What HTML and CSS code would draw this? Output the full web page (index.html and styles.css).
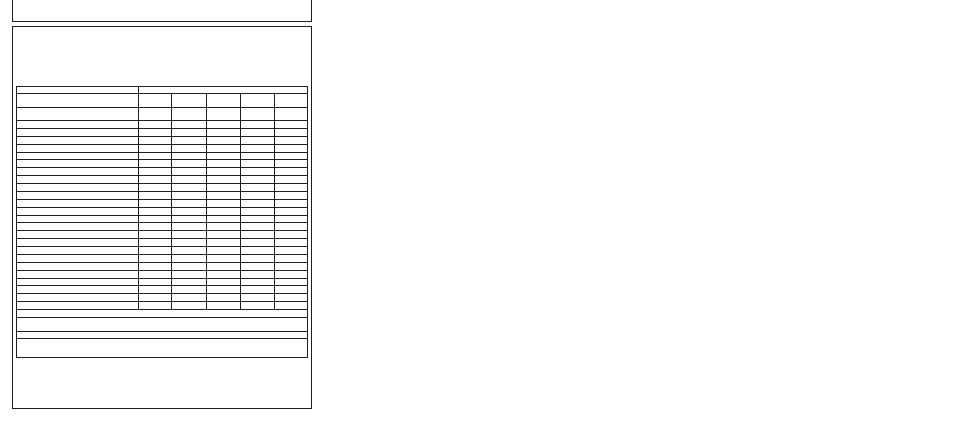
FILE: index.html
```html
<!DOCTYPE html>
<html>
<head>
<meta charset="utf-8">
<link rel="stylesheet" href="styles.css">
</head>
<body>
<div class="page">
  <div class="box top-box"></div>
  <div class="box main-box">
    <div class="grid">
      <div class="row h7"><div class="cell c-label"></div><div class="cell c-span"></div></div>
      <div class="row h14"><div class="cell c1"></div><div class="cell c2"></div><div class="cell c3"></div><div class="cell c4"></div><div class="cell c5"></div><div class="cell c6"></div></div>
      <div class="row h13"><div class="cell c1"></div><div class="cell c2"></div><div class="cell c3"></div><div class="cell c4"></div><div class="cell c5"></div><div class="cell c6"></div></div>
      <div class="data">
        <div class="row d"><div class="cell c1"></div><div class="cell c2"></div><div class="cell c3"></div><div class="cell c4"></div><div class="cell c5"></div><div class="cell c6"></div></div>
        <div class="row d"><div class="cell c1"></div><div class="cell c2"></div><div class="cell c3"></div><div class="cell c4"></div><div class="cell c5"></div><div class="cell c6"></div></div>
        <div class="row d"><div class="cell c1"></div><div class="cell c2"></div><div class="cell c3"></div><div class="cell c4"></div><div class="cell c5"></div><div class="cell c6"></div></div>
        <div class="row d"><div class="cell c1"></div><div class="cell c2"></div><div class="cell c3"></div><div class="cell c4"></div><div class="cell c5"></div><div class="cell c6"></div></div>
        <div class="row d"><div class="cell c1"></div><div class="cell c2"></div><div class="cell c3"></div><div class="cell c4"></div><div class="cell c5"></div><div class="cell c6"></div></div>
        <div class="row d"><div class="cell c1"></div><div class="cell c2"></div><div class="cell c3"></div><div class="cell c4"></div><div class="cell c5"></div><div class="cell c6"></div></div>
        <div class="row d"><div class="cell c1"></div><div class="cell c2"></div><div class="cell c3"></div><div class="cell c4"></div><div class="cell c5"></div><div class="cell c6"></div></div>
        <div class="row d"><div class="cell c1"></div><div class="cell c2"></div><div class="cell c3"></div><div class="cell c4"></div><div class="cell c5"></div><div class="cell c6"></div></div>
        <div class="row d"><div class="cell c1"></div><div class="cell c2"></div><div class="cell c3"></div><div class="cell c4"></div><div class="cell c5"></div><div class="cell c6"></div></div>
        <div class="row d"><div class="cell c1"></div><div class="cell c2"></div><div class="cell c3"></div><div class="cell c4"></div><div class="cell c5"></div><div class="cell c6"></div></div>
        <div class="row d"><div class="cell c1"></div><div class="cell c2"></div><div class="cell c3"></div><div class="cell c4"></div><div class="cell c5"></div><div class="cell c6"></div></div>
        <div class="row d"><div class="cell c1"></div><div class="cell c2"></div><div class="cell c3"></div><div class="cell c4"></div><div class="cell c5"></div><div class="cell c6"></div></div>
        <div class="row d"><div class="cell c1"></div><div class="cell c2"></div><div class="cell c3"></div><div class="cell c4"></div><div class="cell c5"></div><div class="cell c6"></div></div>
        <div class="row d"><div class="cell c1"></div><div class="cell c2"></div><div class="cell c3"></div><div class="cell c4"></div><div class="cell c5"></div><div class="cell c6"></div></div>
        <div class="row d"><div class="cell c1"></div><div class="cell c2"></div><div class="cell c3"></div><div class="cell c4"></div><div class="cell c5"></div><div class="cell c6"></div></div>
        <div class="row d"><div class="cell c1"></div><div class="cell c2"></div><div class="cell c3"></div><div class="cell c4"></div><div class="cell c5"></div><div class="cell c6"></div></div>
        <div class="row d"><div class="cell c1"></div><div class="cell c2"></div><div class="cell c3"></div><div class="cell c4"></div><div class="cell c5"></div><div class="cell c6"></div></div>
        <div class="row d"><div class="cell c1"></div><div class="cell c2"></div><div class="cell c3"></div><div class="cell c4"></div><div class="cell c5"></div><div class="cell c6"></div></div>
        <div class="row d"><div class="cell c1"></div><div class="cell c2"></div><div class="cell c3"></div><div class="cell c4"></div><div class="cell c5"></div><div class="cell c6"></div></div>
        <div class="row d"><div class="cell c1"></div><div class="cell c2"></div><div class="cell c3"></div><div class="cell c4"></div><div class="cell c5"></div><div class="cell c6"></div></div>
        <div class="row d"><div class="cell c1"></div><div class="cell c2"></div><div class="cell c3"></div><div class="cell c4"></div><div class="cell c5"></div><div class="cell c6"></div></div>
        <div class="row d"><div class="cell c1"></div><div class="cell c2"></div><div class="cell c3"></div><div class="cell c4"></div><div class="cell c5"></div><div class="cell c6"></div></div>
        <div class="row d"><div class="cell c1"></div><div class="cell c2"></div><div class="cell c3"></div><div class="cell c4"></div><div class="cell c5"></div><div class="cell c6"></div></div>
        <div class="row d"><div class="cell c1"></div><div class="cell c2"></div><div class="cell c3"></div><div class="cell c4"></div><div class="cell c5"></div><div class="cell c6"></div></div>
      </div>
      <div class="row h8 full"></div>
      <div class="row h14 full"></div>
      <div class="row h7 full"></div>
      <div class="row h19 full"></div>
    </div>
  </div>
</div>
</body>
</html>
```
FILE: styles.css
```css
* { box-sizing: border-box; }
html, body { margin: 0; padding: 0; background: #fff; }
body { font-family: "Liberation Sans", Arial, sans-serif; }

.page {
  padding-left: 12px;
  width: 312px;
}

.box {
  width: 300px;
  border: 1px solid #1e1e1e;
  background: #fff;
}

.top-box {
  margin-top: -20px;
  height: 42px;
}

.main-box {
  margin-top: 4px;
  height: 383px;
  padding: 59px 3px 0 3px;
}

.grid {
  width: 292px;
  border-top: 1px solid #1e1e1e;
  border-left: 1px solid #1e1e1e;
  border-right: 1px solid #1e1e1e;
}

.row {
  display: flex;
  border-bottom: 1px solid #1e1e1e;
}

.full { border-bottom: 1px solid #1e1e1e; }

.h7 { height: 7px; }
.h8 { height: 8px; }
.h13 { height: 13px; }
.h14 { height: 14px; }
.h19 { height: 19px; }
.d { height: 7.875px; }

.cell {
  height: 100%;
  border-right: 1px solid #1e1e1e;
}
.cell:last-child { border-right: none; }

.c-label { width: 122px; }
.c-span { flex: 1; }
.c1 { width: 122px; }
.c2 { width: 33px; }
.c3 { width: 35px; }
.c4 { width: 34px; }
.c5 { width: 34px; }
.c6 { flex: 1; }
```
